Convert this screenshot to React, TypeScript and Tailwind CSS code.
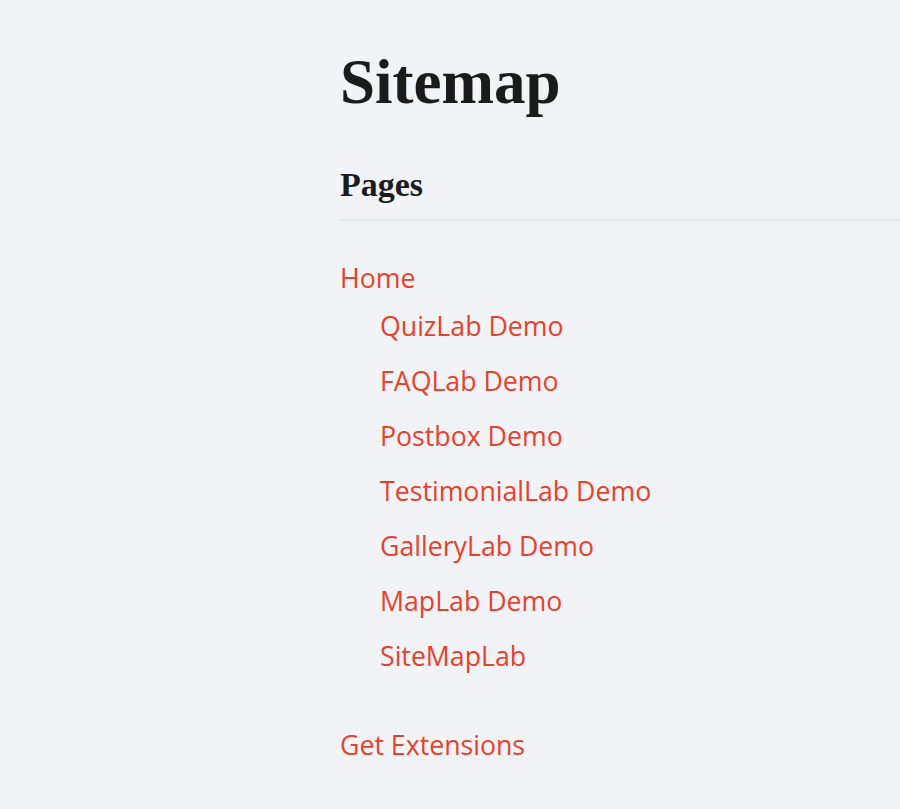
import React from "react";

const sub = [
  "QuizLab Demo",
  "FAQLab Demo",
  "Postbox Demo",
  "TestimonialLab Demo",
  "GalleryLab Demo",
  "MapLab Demo",
  "SiteMapLab",
];

export default function App() {
  return (
    <div className="min-h-[809px] w-full bg-[#f2f3f7] overflow-hidden">
      <div className="ml-[340px] pt-[51px]">
        <h1 className="font-['Liberation_Serif',serif] text-[63px] leading-[63px] font-bold text-[#1b1b1b]">
          Sitemap
        </h1>
        <h2 className="mt-[54px] pb-[17px] border-b-2 border-[#e6e7eb] font-['Liberation_Serif',serif] text-[34px] leading-[34px] font-bold text-[#1b1b1b]">
          Pages
        </h2>
        <ul className="mt-[37px] font-['Open_Sans',sans-serif] text-[26.7px] leading-[39px] text-[#e8412c]">
          <li>
            <a href="#">Home</a>
            <ul className="mt-[9px] pl-[40px] flex flex-col gap-[16px]">
              {sub.map((s) => (
                <li key={s}>
                  <a href="#">{s}</a>
                </li>
              ))}
            </ul>
          </li>
          <li className="mt-[50px]">
            <a href="#">Get Extensions</a>
          </li>
        </ul>
      </div>
    </div>
  );
}
